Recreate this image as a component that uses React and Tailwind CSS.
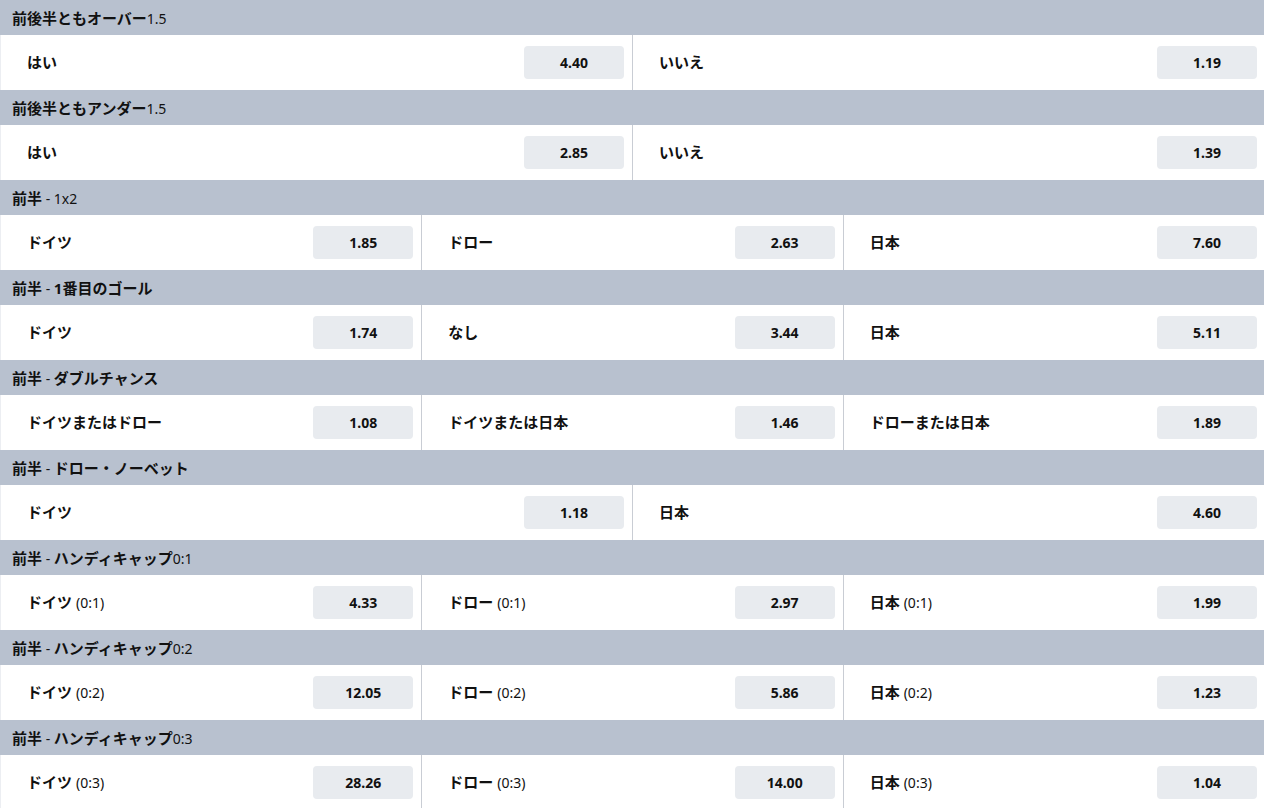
import React from 'react';

const markets = [
  { title: [['前後半ともオーバー', true], ['1.5', false]], outcomes: [['はい', '', '4.40'], ['いいえ', '', '1.19']] },
  { title: [['前後半ともアンダー', true], ['1.5', false]], outcomes: [['はい', '', '2.85'], ['いいえ', '', '1.39']] },
  { title: [['前半', true], [' - 1x2', false]], outcomes: [['ドイツ', '', '1.85'], ['ドロー', '', '2.63'], ['日本', '', '7.60']] },
  { title: [['前半', true], [' - ', false], ['1番目のゴール', true]], outcomes: [['ドイツ', '', '1.74'], ['なし', '', '3.44'], ['日本', '', '5.11']] },
  { title: [['前半', true], [' - ', false], ['ダブルチャンス', true]], outcomes: [['ドイツまたはドロー', '', '1.08'], ['ドイツまたは日本', '', '1.46'], ['ドローまたは日本', '', '1.89']] },
  { title: [['前半', true], [' - ', false], ['ドロー・ノーベット', true]], outcomes: [['ドイツ', '', '1.18'], ['日本', '', '4.60']] },
  { title: [['前半', true], [' - ', false], ['ハンディキャップ', true], ['0:1', false]], outcomes: [['ドイツ', '(0:1)', '4.33'], ['ドロー', '(0:1)', '2.97'], ['日本', '(0:1)', '1.99']] },
  { title: [['前半', true], [' - ', false], ['ハンディキャップ', true], ['0:2', false]], outcomes: [['ドイツ', '(0:2)', '12.05'], ['ドロー', '(0:2)', '5.86'], ['日本', '(0:2)', '1.23']] },
  { title: [['前半', true], [' - ', false], ['ハンディキャップ', true], ['0:3', false]], outcomes: [['ドイツ', '(0:3)', '28.26'], ['ドロー', '(0:3)', '14.00'], ['日本', '(0:3)', '1.04']] },
];

function Outcome({ label, line, odds, first, last }) {
  return (
    <div
      className={`flex items-center justify-between pl-[26px] ${last ? 'pr-[7px]' : 'pr-[8px]'} border-l ${first ? 'border-[#eceef2]' : 'border-[#c9cdd4]'}`}
    >
      <span className="text-[#111] flex items-baseline">
        <span className="font-bold text-[15px]">{label}</span>
        {line && <span className="ml-[4px] font-normal text-[14px]">{line}</span>}
      </span>
      <button className="w-[100px] h-[33px] rounded-[4px] bg-[#e8ebef] text-[14px] font-bold text-[#111]">
        {odds}
      </button>
    </div>
  );
}

export default function App() {
  return (
    <div
      className="w-[1264px] h-[808px] overflow-hidden bg-white"
      style={{ fontFamily: '"Noto Sans", "Noto Sans CJK JP", sans-serif' }}
    >
      {markets.map((m, i) => (
        <div key={i}>
          <div className="h-[35px] bg-[#b8c1cf] flex items-baseline pt-[7px] pl-[12px] text-[#111]">
            {m.title.map(([t, bold], j) => (
              <span key={j} className={`whitespace-pre ${bold ? 'font-bold text-[15px]' : 'font-normal text-[14px]'}`}>{t}</span>
            ))}
          </div>
          <div className={`h-[55px] grid ${m.outcomes.length === 3 ? 'grid-cols-3' : 'grid-cols-2'}`}>
            {m.outcomes.map(([label, line, odds], j) => (
              <Outcome
                key={j}
                label={label}
                line={line}
                odds={odds}
                first={j === 0}
                last={j === m.outcomes.length - 1}
              />
            ))}
          </div>
        </div>
      ))}
    </div>
  );
}
